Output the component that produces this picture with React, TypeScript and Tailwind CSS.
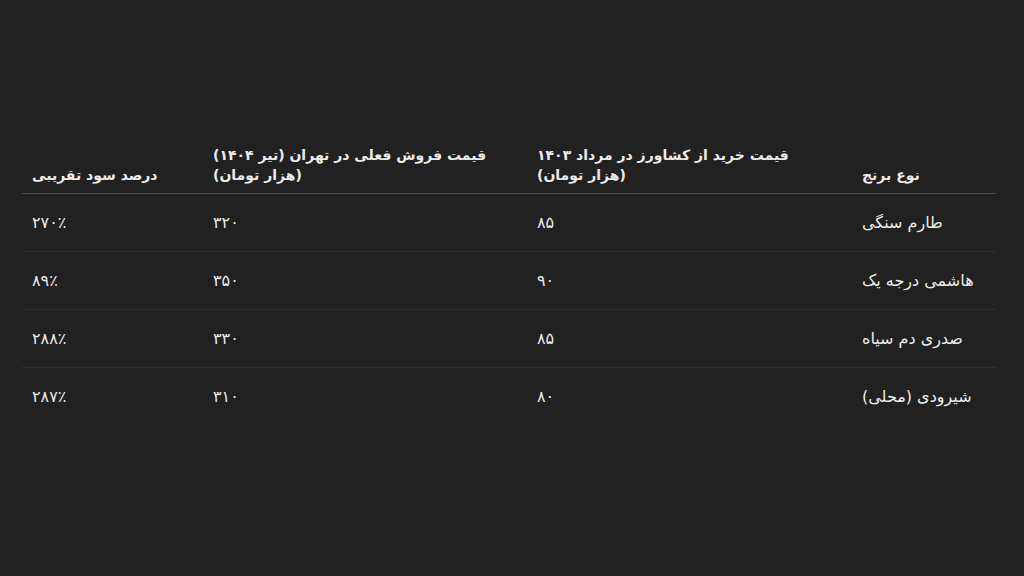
import React from 'react';

interface RiceRow {
  name: string;
  buy: string;
  sell: string;
  profit: string;
}

const rows: RiceRow[] = [
  { name: 'طارم سنگی', buy: '۸۵', sell: '۳۲۰', profit: '۲۷۰٪' },
  { name: 'هاشمی درجه یک', buy: '۹۰', sell: '۳۵۰', profit: '۸۹٪' },
  { name: 'صدری دم سیاه', buy: '۸۵', sell: '۳۳۰', profit: '۲۸۸٪' },
  { name: 'شیرودی (محلی)', buy: '۸۰', sell: '۳۱۰', profit: '۲۸۷٪' },
];

const App = () => {
  return (
    <div
      className="min-h-screen w-full bg-[#212121] pt-[137px] px-[22px] text-[#ececec]"
      style={{ fontFamily: '"DejaVu Sans", "Noto Sans", sans-serif' }}
    >
      <table dir="rtl" className="w-[974px] table-fixed border-collapse text-left">
        <colgroup>
          <col className="w-[144px]" />
          <col className="w-[325px]" />
          <col className="w-[324px]" />
          <col className="w-[181px]" />
        </colgroup>
        <thead>
          <tr className="border-b border-b-[#4a4a4a]">
            <th className="pl-[10px] pt-2 pb-[8px] align-bottom text-left text-[14px] font-bold leading-[20px]">
              نوع برنج
            </th>
            <th className="pl-[10px] pt-2 pb-[8px] align-bottom text-left text-[14px] font-bold leading-[20px]">
              قیمت خرید از کشاورز در مرداد ۱۴۰۳
              <br />
              (هزار تومان)
            </th>
            <th className="pl-[10px] pt-2 pb-[8px] align-bottom text-left text-[14px] font-bold leading-[20px]">
              قیمت فروش فعلی در تهران (تیر ۱۴۰۴)
              <br />
              (هزار تومان)
            </th>
            <th className="pl-[10px] pt-2 pb-[8px] align-bottom text-left text-[14px] font-bold leading-[20px]">
              درصد سود تقریبی
            </th>
          </tr>
        </thead>
        <tbody>
          {rows.map((row, index) => (
            <tr
              key={index}
              className={index < rows.length - 1 ? 'border-b border-b-[#2e2e2e]' : ''}
            >
              <td className="pl-[10px] py-4 text-[16px] leading-[25px]">{row.name}</td>
              <td className="pl-[10px] py-4 text-[16px] leading-[25px]">{row.buy}</td>
              <td className="pl-[10px] py-4 text-[16px] leading-[25px]">{row.sell}</td>
              <td className="pl-[10px] py-4 text-[16px] leading-[25px]">{row.profit}</td>
            </tr>
          ))}
        </tbody>
      </table>
    </div>
  );
};

export default App;
